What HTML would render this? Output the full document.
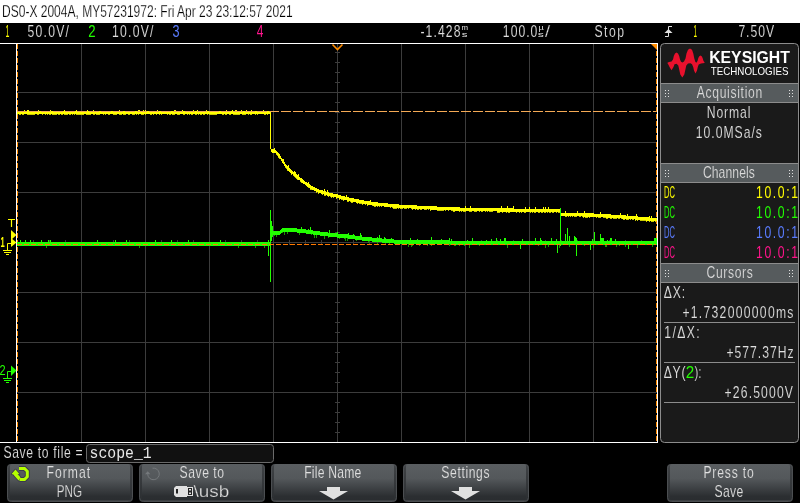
<!DOCTYPE html>
<html><head><meta charset="utf-8"><style>
html,body{margin:0;padding:0;background:#000;width:800px;height:503px;overflow:hidden}
svg{display:block;will-change:transform}
text{font-family:"Liberation Sans",sans-serif}
</style></head><body>
<svg width="800" height="503" viewBox="0 0 800 503">
<rect width="800" height="503" fill="#000"/>
<rect x="0" y="0" width="800" height="23" fill="#ffffff"/>
<text x="2.02" y="17" font-size="17.4" textLength="290.57" lengthAdjust="spacingAndGlyphs" fill="#000" stroke="#fff" stroke-width="0.25">DS0-X 2004A, MY57231972: Fri Apr 23 23:12:57 2021</text>
<text x="5.47" y="37" font-size="17.4" textLength="3.87" lengthAdjust="spacingAndGlyphs" fill="#ffff00">1</text>
<text transform="translate(27.51 37) scale(0.7 1)" font-size="17.4" letter-spacing="1.793" fill="#e0e0e0" stroke="#000" stroke-width="0.150">50.0V/</text>
<text x="88.34" y="37" font-size="17.4" textLength="7.32" lengthAdjust="spacingAndGlyphs" fill="#22ff00">2</text>
<text transform="translate(112.07 37) scale(0.7 1)" font-size="17.4" letter-spacing="1.775" fill="#e0e0e0" stroke="#000" stroke-width="0.150">10.0V/</text>
<text x="172.52" y="37" font-size="17.4" textLength="7.04" lengthAdjust="spacingAndGlyphs" fill="#5a7cff">3</text>
<text x="256.73" y="37" font-size="17.4" textLength="6.62" lengthAdjust="spacingAndGlyphs" fill="#ff148c">4</text>
<text transform="translate(420.46 37) scale(0.7 1)" font-size="17.4" letter-spacing="1.581" fill="#e0e0e0" stroke="#000" stroke-width="0.150">-1.428</text>
<text x="461.58" y="29.8" font-size="7" textLength="6.54" lengthAdjust="spacingAndGlyphs" fill="#e0e0e0">m</text>
<text x="461.68" y="36.5" font-size="7.8" textLength="5.73" lengthAdjust="spacingAndGlyphs" fill="#e0e0e0">s</text>
<text transform="translate(502.87 37) scale(0.7 1)" font-size="17.4" letter-spacing="1.437" fill="#e0e0e0" stroke="#000" stroke-width="0.150">100.0</text>
<text x="538.42" y="29.5" font-size="7.5" textLength="5.30" lengthAdjust="spacingAndGlyphs" fill="#e0e0e0">µ</text>
<text x="537.79" y="36.5" font-size="7.8" textLength="6.10" lengthAdjust="spacingAndGlyphs" fill="#e0e0e0">s</text>
<text x="545.00" y="37" font-size="17.4" textLength="5.20" lengthAdjust="spacingAndGlyphs" fill="#e0e0e0" stroke="#000" stroke-width="0.25">/</text>
<text transform="translate(594.45 37) scale(0.7 1)" font-size="17.4" letter-spacing="2.147" fill="#e0e0e0" stroke="#000" stroke-width="0.150">Stop</text>
<text x="693.43" y="37" font-size="17.4" textLength="3.53" lengthAdjust="spacingAndGlyphs" fill="#ffff00">1</text>
<text transform="translate(738.38 37) scale(0.7 1)" font-size="17.4" letter-spacing="1.374" fill="#e0e0e0" stroke="#000" stroke-width="0.150">7.50V</text>
<path d="M665 36.5H668.5V26.5H672" stroke="#e0e0e0" stroke-width="1" fill="none"/>
<path d="M664.5 33L668.5 29L672.5 33Z" fill="#e0e0e0"/>
<path d="M81.5 44V442 M145.5 44V442 M209.5 44V442 M273.5 44V442 M337.5 44V442 M401.5 44V442 M465.5 44V442 M529.5 44V442 M593.5 44V442 M17 92.5H657 M17 142.5H657 M17 192.5H657 M17 242.5H657 M17 292.5H657 M17 342.5H657 M17 392.5H657 M335 52.5H340 M335 62.5H340 M335 72.5H340 M335 82.5H340 M335 92.5H340 M335 102.5H340 M335 112.5H340 M335 122.5H340 M335 132.5H340 M335 142.5H340 M335 152.5H340 M335 162.5H340 M335 172.5H340 M335 182.5H340 M335 192.5H340 M335 202.5H340 M335 212.5H340 M335 222.5H340 M335 232.5H340 M335 242.5H340 M335 252.5H340 M335 262.5H340 M335 272.5H340 M335 282.5H340 M335 292.5H340 M335 302.5H340 M335 312.5H340 M335 322.5H340 M335 332.5H340 M335 342.5H340 M335 352.5H340 M335 362.5H340 M335 372.5H340 M335 382.5H340 M335 392.5H340 M335 402.5H340 M335 412.5H340 M335 422.5H340 M335 432.5H340 M33.5 240V245 M49.5 240V245 M65.5 240V245 M81.5 240V245 M97.5 240V245 M113.5 240V245 M129.5 240V245 M145.5 240V245 M161.5 240V245 M177.5 240V245 M193.5 240V245 M209.5 240V245 M225.5 240V245 M241.5 240V245 M257.5 240V245 M273.5 240V245 M289.5 240V245 M305.5 240V245 M321.5 240V245 M337.5 240V245 M353.5 240V245 M369.5 240V245 M385.5 240V245 M401.5 240V245 M417.5 240V245 M433.5 240V245 M449.5 240V245 M465.5 240V245 M481.5 240V245 M497.5 240V245 M513.5 240V245 M529.5 240V245 M545.5 240V245 M561.5 240V245 M577.5 240V245 M593.5 240V245 M609.5 240V245 M625.5 240V245 M641.5 240V245" stroke="#3c3c3c" stroke-width="1" fill="none"/>
<path d="M0 43.5H657.5 M16.5 43V443 M657.5 43V443 M0 442.5H658" stroke="#ffffff" stroke-width="1" fill="none"/>
<path d="M17.5 44V442 M656.5 44V442" stroke="#ff8c00" stroke-width="1" stroke-dasharray="5 2" fill="none"/>
<path d="M17 114h1v1h-1zM19 114h1v1h-1zM20 114h1v1h-1zM22 114h1v1h-1zM23 114h1v1h-1zM27 114h1v1h-1zM28 114h1v1h-1zM29 114h1v1h-1zM30 114h1v1h-1zM31 114h1v1h-1zM32 114h1v1h-1zM33 114h1v1h-1zM34 114h1v1h-1zM37 114h1v1h-1zM38 114h1v1h-1zM42 114h1v1h-1zM45 114h1v1h-1zM47 114h1v1h-1zM49 114h1v1h-1zM50 114h1v1h-1zM52 114h1v1h-1zM53 114h1v1h-1zM54 114h1v1h-1zM55 114h1v1h-1zM56 114h1v1h-1zM58 114h1v1h-1zM59 114h1v1h-1zM61 114h1v1h-1zM62 114h1v1h-1zM64 114h1v1h-1zM65 114h1v1h-1zM66 114h1v1h-1zM67 114h1v1h-1zM69 114h1v1h-1zM70 114h1v1h-1zM72 114h1v1h-1zM74 114h1v1h-1zM76 114h1v1h-1zM77 114h1v1h-1zM78 114h1v1h-1zM79 114h1v1h-1zM80 114h1v1h-1zM81 114h1v1h-1zM82 114h1v1h-1zM83 114h1v1h-1zM86 114h1v1h-1zM87 114h1v1h-1zM88 114h1v1h-1zM89 114h1v1h-1zM90 114h1v1h-1zM93 114h1v1h-1zM94 114h1v1h-1zM96 114h1v1h-1zM97 114h1v1h-1zM98 114h1v1h-1zM99 114h1v1h-1zM103 114h1v1h-1zM105 114h1v1h-1zM108 114h1v1h-1zM109 114h1v1h-1zM113 114h1v1h-1zM114 114h1v1h-1zM115 114h1v1h-1zM116 114h1v1h-1zM119 114h1v1h-1zM120 114h1v1h-1zM121 114h1v1h-1zM123 114h1v1h-1zM124 114h1v1h-1zM125 114h1v1h-1zM128 114h1v1h-1zM129 114h1v1h-1zM132 114h1v1h-1zM133 114h1v1h-1zM134 114h1v1h-1zM136 114h1v1h-1zM138 114h1v1h-1zM141 114h1v1h-1zM142 114h1v1h-1zM143 114h1v1h-1zM145 114h1v1h-1zM150 114h1v1h-1zM151 114h1v1h-1zM153 114h1v1h-1zM156 114h1v1h-1zM159 114h1v1h-1zM161 114h1v1h-1zM167 114h1v1h-1zM169 114h1v1h-1zM170 114h1v1h-1zM172 114h1v1h-1zM173 114h1v1h-1zM174 114h1v1h-1zM177 114h1v1h-1zM178 114h1v1h-1zM179 114h1v1h-1zM183 114h1v1h-1zM184 114h1v1h-1zM187 114h1v1h-1zM189 114h1v1h-1zM191 114h1v1h-1zM192 114h1v1h-1zM195 114h1v1h-1zM196 114h1v1h-1zM198 114h1v1h-1zM200 114h1v1h-1zM201 114h1v1h-1zM203 114h1v1h-1zM204 114h1v1h-1zM207 114h1v1h-1zM209 114h1v1h-1zM210 114h1v1h-1zM211 114h1v1h-1zM212 114h1v1h-1zM213 114h1v1h-1zM214 114h1v1h-1zM215 114h1v1h-1zM216 114h1v1h-1zM222 114h1v1h-1zM223 114h1v1h-1zM225 114h1v1h-1zM226 114h1v1h-1zM229 114h1v1h-1zM230 114h1v1h-1zM233 114h1v1h-1zM234 114h1v1h-1zM235 114h1v1h-1zM236 114h1v1h-1zM237 114h1v1h-1zM238 114h1v1h-1zM239 114h1v1h-1zM242 114h1v1h-1zM243 114h1v1h-1zM244 114h1v1h-1zM245 114h1v1h-1zM248 114h1v1h-1zM250 114h1v1h-1zM251 114h1v1h-1zM255 114h1v1h-1zM257 114h1v1h-1zM264 114h1v1h-1zM265 114h1v1h-1zM267 114h1v1h-1zM276 154h1v1h-1zM277 155h1v1h-1zM278 157h1v1h-1zM279 158h1v1h-1zM285 167h1v1h-1zM286 168h1v1h-1zM287 170h1v1h-1zM291 174h1v1h-1zM293 175h1v1h-1zM294 176h1v1h-1zM295 177h1v1h-1zM296 178h1v1h-1zM297 179h1v1h-1zM300 181h1v1h-1zM301 182h1v1h-1zM308 187h1v1h-1zM310 189h1v1h-1zM311 189h1v1h-1zM316 192h1v1h-1zM318 193h1v1h-1zM322 194h1v1h-1zM324 195h1v1h-1zM325 195h1v1h-1zM328 196h1v1h-1zM330 196h1v1h-1zM331 197h1v1h-1zM333 197h1v1h-1zM336 198h1v1h-1zM339 199h1v1h-1zM341 199h1v1h-1zM342 199h1v1h-1zM343 200h1v1h-1zM347 201h1v1h-1zM348 201h1v1h-1zM350 201h1v1h-1zM351 202h1v1h-1zM352 202h1v1h-1zM357 203h1v1h-1zM359 203h1v1h-1zM360 203h1v1h-1zM361 203h1v1h-1zM362 204h1v1h-1zM365 204h1v1h-1zM367 205h1v1h-1zM372 205h1v1h-1zM374 206h1v1h-1zM375 206h1v1h-1zM377 206h1v1h-1zM379 206h1v1h-1zM381 206h1v1h-1zM390 207h1v1h-1zM392 207h1v1h-1zM393 208h1v1h-1zM394 208h1v1h-1zM395 208h1v1h-1zM396 208h1v1h-1zM398 208h1v1h-1zM400 208h1v1h-1zM401 208h1v1h-1zM402 208h1v1h-1zM404 208h1v1h-1zM405 208h1v1h-1zM406 208h1v1h-1zM408 208h1v1h-1zM411 208h1v1h-1zM412 209h1v1h-1zM415 209h1v1h-1zM417 209h1v1h-1zM418 209h1v1h-1zM420 209h1v1h-1zM421 209h1v1h-1zM424 209h1v1h-1zM425 209h1v1h-1zM426 209h1v1h-1zM428 209h1v1h-1zM430 210h1v1h-1zM437 210h1v1h-1zM438 210h1v1h-1zM439 210h1v1h-1zM440 210h1v1h-1zM441 210h1v1h-1zM442 210h1v1h-1zM443 210h1v1h-1zM445 210h1v1h-1zM448 210h1v1h-1zM451 210h1v1h-1zM452 210h1v1h-1zM453 211h1v1h-1zM454 211h1v1h-1zM459 211h1v1h-1zM461 211h1v1h-1zM463 211h1v1h-1zM464 211h1v1h-1zM465 211h1v1h-1zM469 211h1v1h-1zM470 211h1v1h-1zM471 211h1v1h-1zM474 211h1v1h-1zM475 211h1v1h-1zM476 211h1v1h-1zM479 211h1v1h-1zM481 211h1v1h-1zM482 211h1v1h-1zM485 211h1v1h-1zM487 211h1v1h-1zM489 211h1v1h-1zM490 211h1v1h-1zM491 211h1v1h-1zM492 211h1v1h-1zM497 212h1v1h-1zM498 212h1v1h-1zM499 212h1v1h-1zM502 212h1v1h-1zM506 212h1v1h-1zM508 212h1v1h-1zM509 212h1v1h-1zM516 212h1v1h-1zM519 212h1v1h-1zM521 212h1v1h-1zM524 212h1v1h-1zM525 212h1v1h-1zM530 212h1v1h-1zM532 212h1v1h-1zM534 212h1v1h-1zM535 212h1v1h-1zM538 212h1v1h-1zM539 212h1v1h-1zM541 212h1v1h-1zM542 212h1v1h-1zM544 212h1v1h-1zM545 212h1v1h-1zM547 212h1v1h-1zM549 212h1v1h-1zM550 212h1v1h-1zM552 212h1v1h-1zM553 212h1v1h-1zM556 212h1v1h-1zM558 212h1v1h-1zM559 212h1v1h-1zM560 214h1v1h-1zM565 216h1v1h-1zM566 216h1v1h-1zM568 216h1v1h-1zM570 216h1v1h-1zM572 216h1v1h-1zM574 216h1v1h-1zM575 216h1v1h-1zM576 216h1v1h-1zM579 216h1v1h-1zM580 216h1v1h-1zM582 216h1v1h-1zM583 217h1v1h-1zM585 217h1v1h-1zM586 217h1v1h-1zM587 217h1v1h-1zM589 217h1v1h-1zM596 217h1v1h-1zM598 217h1v1h-1zM599 217h1v1h-1zM600 217h1v1h-1zM603 217h1v1h-1zM604 217h1v1h-1zM605 217h1v1h-1zM606 218h1v1h-1zM607 218h1v1h-1zM610 218h1v1h-1zM611 218h1v1h-1zM613 218h1v1h-1zM614 218h1v1h-1zM615 218h1v1h-1zM616 218h1v1h-1zM618 218h1v1h-1zM619 218h1v1h-1zM621 218h1v1h-1zM623 219h1v1h-1zM624 219h1v1h-1zM626 219h1v1h-1zM627 219h1v1h-1zM628 219h1v1h-1zM630 219h1v1h-1zM632 219h1v1h-1zM633 219h1v1h-1zM635 220h1v1h-1zM637 220h1v1h-1zM640 220h1v1h-1zM641 220h1v1h-1zM642 220h1v1h-1zM643 220h1v1h-1zM644 220h1v1h-1zM645 220h1v1h-1zM646 221h1v1h-1zM649 221h1v1h-1zM651 221h1v1h-1zM652 221h1v1h-1zM653 221h1v1h-1zM655 221h1v1h-1z" fill="#c8c800"/>
<path d="M17 111h1v3h-1zM18 111h1v3h-1zM19 111h1v3h-1zM20 111h1v3h-1zM21 111h1v3h-1zM22 111h1v3h-1zM23 111h1v3h-1zM24 111h1v3h-1zM24 110h1v1h-1zM25 111h1v3h-1zM26 111h1v3h-1zM27 111h1v3h-1zM27 110h1v1h-1zM28 111h1v3h-1zM28 110h1v1h-1zM29 111h1v3h-1zM30 111h1v3h-1zM31 111h1v3h-1zM32 111h1v3h-1zM33 111h1v3h-1zM34 111h1v3h-1zM35 111h1v3h-1zM36 111h1v3h-1zM37 111h1v3h-1zM38 111h1v3h-1zM38 110h1v1h-1zM39 111h1v3h-1zM40 111h1v3h-1zM41 111h1v3h-1zM42 111h1v3h-1zM43 111h1v3h-1zM44 111h1v3h-1zM45 111h1v3h-1zM46 111h1v3h-1zM47 111h1v3h-1zM48 111h1v3h-1zM49 111h1v3h-1zM50 111h1v3h-1zM50 110h1v1h-1zM51 111h1v3h-1zM52 111h1v3h-1zM53 111h1v3h-1zM54 111h1v3h-1zM55 111h1v3h-1zM56 111h1v3h-1zM57 111h1v3h-1zM58 111h1v3h-1zM59 111h1v3h-1zM60 111h1v3h-1zM61 111h1v3h-1zM62 111h1v3h-1zM63 111h1v3h-1zM64 111h1v3h-1zM64 110h1v1h-1zM65 111h1v3h-1zM66 111h1v3h-1zM67 111h1v3h-1zM68 111h1v3h-1zM69 111h1v3h-1zM70 111h1v3h-1zM71 111h1v3h-1zM72 111h1v3h-1zM73 111h1v3h-1zM74 111h1v3h-1zM75 111h1v3h-1zM76 111h1v3h-1zM76 110h1v1h-1zM77 111h1v3h-1zM78 111h1v3h-1zM79 111h1v3h-1zM80 111h1v3h-1zM81 111h1v3h-1zM82 111h1v3h-1zM83 111h1v3h-1zM84 111h1v3h-1zM85 111h1v3h-1zM86 111h1v3h-1zM87 111h1v3h-1zM87 110h1v1h-1zM88 111h1v3h-1zM89 111h1v3h-1zM90 111h1v3h-1zM91 111h1v3h-1zM92 111h1v3h-1zM93 111h1v3h-1zM93 110h1v1h-1zM94 111h1v3h-1zM95 111h1v3h-1zM96 111h1v3h-1zM97 111h1v3h-1zM98 111h1v3h-1zM99 111h1v3h-1zM100 111h1v3h-1zM101 111h1v3h-1zM102 111h1v3h-1zM103 111h1v3h-1zM104 111h1v3h-1zM105 111h1v3h-1zM106 111h1v3h-1zM107 111h1v3h-1zM108 111h1v3h-1zM109 111h1v3h-1zM110 111h1v3h-1zM111 111h1v3h-1zM112 111h1v3h-1zM113 111h1v3h-1zM114 111h1v3h-1zM115 111h1v3h-1zM116 111h1v3h-1zM117 111h1v3h-1zM118 111h1v3h-1zM119 111h1v3h-1zM119 110h1v1h-1zM120 111h1v3h-1zM121 111h1v3h-1zM122 111h1v3h-1zM123 111h1v3h-1zM124 111h1v3h-1zM125 111h1v3h-1zM126 111h1v3h-1zM127 111h1v3h-1zM128 111h1v3h-1zM129 111h1v3h-1zM130 111h1v3h-1zM131 111h1v3h-1zM132 111h1v3h-1zM133 111h1v3h-1zM134 111h1v3h-1zM135 111h1v3h-1zM136 111h1v3h-1zM137 111h1v3h-1zM138 111h1v3h-1zM138 110h1v1h-1zM139 111h1v3h-1zM139 110h1v1h-1zM140 111h1v3h-1zM141 111h1v3h-1zM142 111h1v3h-1zM143 111h1v3h-1zM143 110h1v1h-1zM144 111h1v3h-1zM145 111h1v3h-1zM145 110h1v1h-1zM146 111h1v3h-1zM147 111h1v3h-1zM148 111h1v3h-1zM149 111h1v3h-1zM150 111h1v3h-1zM151 111h1v3h-1zM152 111h1v3h-1zM153 111h1v3h-1zM154 111h1v3h-1zM155 111h1v3h-1zM156 111h1v3h-1zM157 111h1v3h-1zM157 110h1v1h-1zM158 111h1v3h-1zM159 111h1v3h-1zM160 111h1v3h-1zM161 111h1v3h-1zM162 111h1v3h-1zM163 111h1v3h-1zM164 111h1v3h-1zM165 111h1v3h-1zM166 111h1v3h-1zM167 111h1v3h-1zM168 111h1v3h-1zM169 111h1v3h-1zM170 111h1v3h-1zM171 111h1v3h-1zM172 111h1v3h-1zM173 111h1v3h-1zM174 111h1v3h-1zM174 110h1v1h-1zM175 111h1v3h-1zM175 110h1v1h-1zM176 111h1v3h-1zM177 111h1v3h-1zM178 111h1v3h-1zM179 111h1v3h-1zM180 111h1v3h-1zM181 111h1v3h-1zM182 111h1v3h-1zM182 110h1v1h-1zM183 111h1v3h-1zM184 111h1v3h-1zM185 111h1v3h-1zM186 111h1v3h-1zM187 111h1v3h-1zM188 111h1v3h-1zM189 111h1v3h-1zM190 111h1v3h-1zM191 111h1v3h-1zM192 111h1v3h-1zM193 111h1v3h-1zM193 110h1v1h-1zM194 111h1v3h-1zM195 111h1v3h-1zM196 111h1v3h-1zM197 111h1v3h-1zM197 110h1v1h-1zM198 111h1v3h-1zM199 111h1v3h-1zM200 111h1v3h-1zM201 111h1v3h-1zM202 111h1v3h-1zM203 111h1v3h-1zM204 111h1v3h-1zM205 111h1v3h-1zM206 111h1v3h-1zM206 110h1v1h-1zM207 111h1v3h-1zM208 111h1v3h-1zM209 111h1v3h-1zM210 111h1v3h-1zM211 111h1v3h-1zM212 111h1v3h-1zM213 111h1v3h-1zM214 111h1v3h-1zM215 111h1v3h-1zM216 111h1v3h-1zM217 111h1v3h-1zM218 111h1v3h-1zM219 111h1v3h-1zM220 111h1v3h-1zM221 111h1v3h-1zM222 111h1v3h-1zM223 111h1v3h-1zM224 111h1v3h-1zM225 111h1v3h-1zM226 111h1v3h-1zM226 110h1v1h-1zM227 111h1v3h-1zM228 111h1v3h-1zM229 111h1v3h-1zM230 111h1v3h-1zM231 111h1v3h-1zM232 111h1v3h-1zM232 110h1v1h-1zM233 111h1v3h-1zM234 111h1v3h-1zM235 111h1v3h-1zM235 110h1v1h-1zM236 111h1v3h-1zM236 110h1v1h-1zM237 111h1v3h-1zM238 111h1v3h-1zM239 111h1v3h-1zM240 111h1v3h-1zM241 111h1v3h-1zM241 110h1v1h-1zM242 111h1v3h-1zM243 111h1v3h-1zM244 111h1v3h-1zM245 111h1v3h-1zM246 111h1v3h-1zM246 110h1v1h-1zM247 111h1v3h-1zM248 111h1v3h-1zM249 111h1v3h-1zM250 111h1v3h-1zM251 111h1v3h-1zM251 110h1v1h-1zM252 111h1v3h-1zM253 111h1v3h-1zM254 111h1v3h-1zM255 111h1v3h-1zM256 111h1v3h-1zM257 111h1v3h-1zM258 111h1v3h-1zM259 111h1v3h-1zM260 111h1v3h-1zM261 111h1v3h-1zM262 111h1v3h-1zM263 111h1v3h-1zM263 110h1v1h-1zM264 111h1v3h-1zM265 111h1v3h-1zM266 111h1v3h-1zM267 111h1v3h-1zM268 111h1v3h-1zM269 111h1v3h-1zM270 112h1v37h-1zM271 149h1v3h-1zM272 149h1v4h-1zM273 149h1v4h-1zM274 150h1v3h-1zM274 148h1v2h-1zM275 150h1v3h-1zM276 151h1v3h-1zM277 152h1v3h-1zM278 153h1v4h-1zM279 154h1v4h-1zM280 156h1v3h-1zM281 158h1v3h-1zM282 159h1v4h-1zM283 161h1v3h-1zM283 159h1v2h-1zM284 162h1v4h-1zM285 164h1v3h-1zM286 165h1v3h-1zM287 166h1v4h-1zM288 167h1v4h-1zM288 165h1v2h-1zM289 168h1v4h-1zM290 169h1v4h-1zM291 170h1v4h-1zM292 171h1v3h-1zM293 172h1v3h-1zM294 173h1v3h-1zM294 171h1v2h-1zM295 174h1v3h-1zM295 172h1v2h-1zM296 174h1v4h-1zM297 175h1v4h-1zM298 176h1v4h-1zM298 174h1v2h-1zM299 177h1v3h-1zM300 178h1v3h-1zM301 178h1v4h-1zM302 179h1v4h-1zM303 180h1v4h-1zM304 181h1v3h-1zM305 182h1v3h-1zM306 182h1v4h-1zM307 183h1v4h-1zM308 184h1v3h-1zM308 182h1v2h-1zM309 184h1v4h-1zM310 185h1v4h-1zM311 186h1v3h-1zM312 186h1v4h-1zM313 187h1v3h-1zM314 187h1v4h-1zM315 188h1v3h-1zM316 188h1v4h-1zM317 189h1v3h-1zM318 189h1v4h-1zM319 190h1v3h-1zM320 190h1v3h-1zM321 190h1v4h-1zM322 190h1v4h-1zM323 191h1v3h-1zM324 191h1v4h-1zM324 189h1v2h-1zM325 191h1v4h-1zM326 192h1v3h-1zM327 192h1v4h-1zM327 190h1v2h-1zM328 192h1v4h-1zM329 193h1v3h-1zM330 193h1v3h-1zM331 193h1v4h-1zM332 193h1v4h-1zM333 194h1v3h-1zM334 194h1v3h-1zM335 194h1v3h-1zM336 194h1v4h-1zM337 194h1v4h-1zM338 195h1v3h-1zM339 195h1v4h-1zM340 195h1v4h-1zM341 196h1v3h-1zM342 196h1v3h-1zM343 196h1v4h-1zM344 196h1v4h-1zM345 197h1v3h-1zM346 197h1v3h-1zM346 195h1v2h-1zM347 197h1v4h-1zM348 197h1v4h-1zM349 198h1v3h-1zM350 198h1v3h-1zM351 198h1v4h-1zM352 198h1v4h-1zM353 198h1v4h-1zM354 199h1v3h-1zM355 199h1v3h-1zM356 199h1v4h-1zM357 199h1v4h-1zM358 199h1v4h-1zM359 200h1v3h-1zM360 200h1v3h-1zM361 200h1v3h-1zM362 200h1v4h-1zM363 200h1v4h-1zM364 201h1v3h-1zM365 201h1v3h-1zM366 201h1v3h-1zM367 201h1v4h-1zM368 201h1v4h-1zM369 201h1v4h-1zM370 202h1v3h-1zM370 200h1v2h-1zM371 202h1v3h-1zM372 202h1v3h-1zM373 202h1v4h-1zM374 202h1v4h-1zM375 202h1v4h-1zM376 202h1v4h-1zM377 202h1v4h-1zM378 203h1v3h-1zM379 203h1v3h-1zM380 203h1v3h-1zM381 203h1v3h-1zM382 203h1v3h-1zM383 203h1v3h-1zM384 203h1v4h-1zM385 203h1v4h-1zM386 203h1v4h-1zM387 203h1v4h-1zM388 204h1v3h-1zM389 204h1v3h-1zM390 204h1v3h-1zM391 204h1v3h-1zM392 204h1v3h-1zM393 204h1v4h-1zM394 204h1v4h-1zM395 204h1v4h-1zM396 204h1v4h-1zM397 204h1v4h-1zM398 204h1v4h-1zM399 205h1v3h-1zM400 205h1v3h-1zM401 205h1v3h-1zM402 205h1v3h-1zM403 205h1v3h-1zM404 205h1v3h-1zM405 205h1v3h-1zM406 205h1v3h-1zM407 205h1v3h-1zM408 205h1v3h-1zM409 205h1v3h-1zM410 205h1v3h-1zM411 205h1v3h-1zM412 205h1v4h-1zM413 205h1v4h-1zM414 205h1v4h-1zM415 205h1v4h-1zM416 205h1v4h-1zM417 206h1v3h-1zM418 206h1v3h-1zM419 206h1v3h-1zM420 206h1v3h-1zM421 206h1v3h-1zM422 206h1v3h-1zM423 206h1v3h-1zM424 206h1v3h-1zM425 206h1v3h-1zM426 206h1v3h-1zM427 206h1v3h-1zM428 206h1v3h-1zM429 206h1v3h-1zM430 206h1v4h-1zM431 206h1v4h-1zM432 206h1v4h-1zM433 206h1v4h-1zM434 206h1v4h-1zM435 206h1v4h-1zM436 206h1v4h-1zM437 207h1v3h-1zM438 207h1v3h-1zM439 207h1v3h-1zM440 207h1v3h-1zM441 207h1v3h-1zM442 207h1v3h-1zM443 207h1v3h-1zM444 207h1v3h-1zM445 207h1v3h-1zM446 207h1v3h-1zM447 207h1v3h-1zM448 207h1v3h-1zM449 207h1v3h-1zM450 207h1v3h-1zM451 207h1v3h-1zM452 207h1v3h-1zM453 207h1v4h-1zM454 207h1v4h-1zM455 207h1v4h-1zM456 207h1v4h-1zM457 207h1v4h-1zM458 207h1v4h-1zM459 207h1v4h-1zM460 208h1v3h-1zM461 208h1v3h-1zM462 208h1v3h-1zM463 208h1v3h-1zM464 208h1v3h-1zM465 208h1v3h-1zM465 206h1v2h-1zM466 208h1v3h-1zM467 208h1v3h-1zM468 208h1v3h-1zM469 208h1v3h-1zM470 208h1v3h-1zM470 206h1v2h-1zM471 208h1v3h-1zM472 208h1v3h-1zM473 208h1v3h-1zM474 208h1v3h-1zM475 208h1v3h-1zM476 208h1v3h-1zM477 208h1v3h-1zM478 208h1v3h-1zM479 208h1v3h-1zM480 208h1v3h-1zM481 208h1v3h-1zM482 208h1v3h-1zM483 208h1v3h-1zM484 208h1v3h-1zM485 208h1v3h-1zM486 208h1v3h-1zM487 208h1v3h-1zM488 208h1v3h-1zM489 208h1v3h-1zM490 208h1v3h-1zM491 208h1v3h-1zM492 208h1v3h-1zM493 208h1v3h-1zM494 208h1v3h-1zM495 208h1v3h-1zM496 208h1v3h-1zM497 208h1v4h-1zM498 208h1v4h-1zM499 208h1v4h-1zM500 208h1v4h-1zM501 208h1v4h-1zM501 206h1v2h-1zM502 208h1v4h-1zM503 208h1v4h-1zM504 208h1v4h-1zM505 208h1v4h-1zM506 208h1v4h-1zM507 208h1v4h-1zM507 206h1v2h-1zM508 208h1v4h-1zM509 208h1v4h-1zM510 208h1v4h-1zM511 208h1v4h-1zM512 208h1v4h-1zM513 208h1v4h-1zM513 206h1v2h-1zM514 209h1v3h-1zM515 209h1v3h-1zM516 209h1v3h-1zM517 209h1v3h-1zM518 209h1v3h-1zM519 209h1v3h-1zM520 209h1v3h-1zM521 209h1v3h-1zM522 209h1v3h-1zM523 209h1v3h-1zM524 209h1v3h-1zM525 209h1v3h-1zM525 207h1v2h-1zM526 209h1v3h-1zM527 209h1v3h-1zM528 209h1v3h-1zM529 209h1v3h-1zM529 207h1v2h-1zM530 209h1v3h-1zM531 209h1v3h-1zM532 209h1v3h-1zM533 209h1v3h-1zM534 209h1v3h-1zM535 209h1v3h-1zM535 207h1v2h-1zM536 209h1v3h-1zM537 209h1v3h-1zM538 209h1v3h-1zM539 209h1v3h-1zM540 209h1v3h-1zM541 209h1v3h-1zM542 209h1v3h-1zM543 209h1v3h-1zM543 207h1v2h-1zM544 209h1v3h-1zM545 209h1v3h-1zM545 207h1v2h-1zM546 209h1v3h-1zM547 209h1v3h-1zM548 209h1v3h-1zM548 207h1v2h-1zM549 209h1v3h-1zM550 209h1v3h-1zM551 209h1v3h-1zM552 209h1v3h-1zM553 209h1v3h-1zM554 209h1v3h-1zM555 209h1v3h-1zM556 209h1v3h-1zM557 209h1v3h-1zM558 209h1v3h-1zM559 209h1v3h-1zM560 211h1v3h-1zM561 213h1v3h-1zM562 213h1v3h-1zM563 213h1v3h-1zM564 213h1v3h-1zM565 213h1v3h-1zM565 211h1v2h-1zM566 213h1v3h-1zM567 213h1v3h-1zM568 213h1v3h-1zM569 213h1v3h-1zM570 213h1v3h-1zM571 213h1v3h-1zM572 213h1v3h-1zM573 213h1v3h-1zM574 213h1v3h-1zM575 213h1v3h-1zM576 213h1v3h-1zM577 213h1v3h-1zM577 211h1v2h-1zM578 213h1v3h-1zM579 213h1v3h-1zM580 213h1v3h-1zM581 213h1v3h-1zM582 213h1v3h-1zM583 213h1v4h-1zM584 213h1v4h-1zM584 211h1v2h-1zM585 213h1v4h-1zM586 213h1v4h-1zM587 213h1v4h-1zM588 213h1v4h-1zM589 213h1v4h-1zM590 213h1v4h-1zM591 213h1v4h-1zM592 213h1v4h-1zM593 213h1v4h-1zM594 214h1v3h-1zM595 214h1v3h-1zM596 214h1v3h-1zM597 214h1v3h-1zM598 214h1v3h-1zM599 214h1v3h-1zM600 214h1v3h-1zM600 212h1v2h-1zM601 214h1v3h-1zM602 214h1v3h-1zM603 214h1v3h-1zM604 214h1v3h-1zM605 214h1v3h-1zM606 214h1v4h-1zM607 214h1v4h-1zM608 214h1v4h-1zM609 214h1v4h-1zM610 214h1v4h-1zM611 215h1v3h-1zM612 215h1v3h-1zM613 215h1v3h-1zM614 215h1v3h-1zM615 215h1v3h-1zM616 215h1v3h-1zM617 215h1v3h-1zM618 215h1v3h-1zM619 215h1v3h-1zM620 215h1v3h-1zM620 213h1v2h-1zM621 215h1v3h-1zM622 215h1v4h-1zM623 215h1v4h-1zM624 215h1v4h-1zM625 215h1v4h-1zM626 216h1v3h-1zM627 216h1v3h-1zM627 214h1v2h-1zM628 216h1v3h-1zM629 216h1v3h-1zM630 216h1v3h-1zM631 216h1v3h-1zM632 216h1v3h-1zM633 216h1v3h-1zM634 216h1v3h-1zM635 216h1v4h-1zM636 216h1v4h-1zM636 214h1v2h-1zM637 216h1v4h-1zM638 217h1v3h-1zM639 217h1v3h-1zM640 217h1v3h-1zM641 217h1v3h-1zM642 217h1v3h-1zM643 217h1v3h-1zM644 217h1v3h-1zM645 217h1v3h-1zM646 217h1v4h-1zM647 217h1v4h-1zM648 217h1v4h-1zM649 218h1v3h-1zM649 216h1v2h-1zM650 218h1v3h-1zM651 218h1v3h-1zM651 216h1v2h-1zM652 218h1v3h-1zM653 218h1v3h-1zM654 218h1v3h-1zM655 218h1v3h-1zM656 218h1v3h-1z" fill="#ffff00"/>
<path d="M46 246h1v2h-1zM139 246h1v2h-1zM238 246h1v2h-1zM255 246h1v2h-1zM264 246h1v2h-1zM274 235h1v1h-1zM276 235h1v2h-1zM282 232h1v1h-1zM284 232h1v3h-1zM287 232h1v2h-1zM299 233h1v2h-1zM311 234h1v1h-1zM314 235h1v3h-1zM316 235h1v3h-1zM324 236h1v3h-1zM328 237h1v1h-1zM339 238h1v1h-1zM344 238h1v1h-1zM345 238h1v3h-1zM347 238h1v3h-1zM356 240h1v1h-1zM368 241h1v2h-1zM377 242h1v2h-1zM389 243h1v2h-1zM396 244h1v1h-1zM408 244h1v3h-1zM411 244h1v3h-1zM412 244h1v2h-1zM419 244h1v2h-1zM426 244h1v1h-1zM427 244h1v2h-1zM429 244h1v1h-1zM431 244h1v2h-1zM433 244h1v1h-1zM437 244h1v1h-1zM449 244h1v2h-1zM454 245h1v1h-1zM455 245h1v1h-1zM459 245h1v1h-1zM464 245h1v1h-1zM469 245h1v3h-1zM479 245h1v1h-1zM507 245h1v3h-1zM538 245h1v1h-1zM545 245h1v3h-1zM548 245h1v2h-1zM559 245h1v3h-1zM569 245h1v2h-1zM584 245h1v1h-1zM593 245h1v3h-1zM605 245h1v2h-1zM606 245h1v2h-1zM616 245h1v2h-1zM619 245h1v1h-1zM625 245h1v2h-1zM628 245h1v1h-1zM637 245h1v3h-1zM652 245h1v2h-1z" fill="#1a9900"/>
<path d="M17 242h1v4h-1zM18 242h1v4h-1zM19 242h1v4h-1zM20 242h1v4h-1zM20 240h1v2h-1zM21 242h1v4h-1zM22 242h1v4h-1zM23 242h1v4h-1zM24 242h1v4h-1zM25 242h1v4h-1zM25 240h1v2h-1zM26 242h1v4h-1zM27 242h1v4h-1zM28 242h1v4h-1zM29 242h1v4h-1zM30 242h1v4h-1zM30 240h1v2h-1zM31 242h1v4h-1zM32 242h1v4h-1zM33 242h1v4h-1zM34 242h1v4h-1zM35 242h1v4h-1zM36 242h1v4h-1zM37 242h1v4h-1zM38 242h1v4h-1zM39 242h1v4h-1zM40 242h1v4h-1zM41 242h1v4h-1zM41 240h1v2h-1zM42 242h1v4h-1zM43 242h1v4h-1zM44 242h1v4h-1zM45 242h1v4h-1zM46 242h1v4h-1zM47 242h1v4h-1zM48 242h1v4h-1zM48 240h1v2h-1zM49 242h1v4h-1zM50 242h1v4h-1zM50 240h1v2h-1zM51 242h1v4h-1zM52 242h1v4h-1zM53 242h1v4h-1zM54 242h1v4h-1zM55 242h1v4h-1zM56 242h1v4h-1zM57 242h1v4h-1zM58 242h1v4h-1zM59 242h1v4h-1zM60 242h1v4h-1zM61 242h1v4h-1zM62 242h1v4h-1zM63 242h1v4h-1zM64 242h1v4h-1zM65 242h1v4h-1zM66 242h1v4h-1zM67 242h1v4h-1zM68 242h1v4h-1zM69 242h1v4h-1zM70 242h1v4h-1zM71 242h1v4h-1zM72 242h1v4h-1zM73 242h1v4h-1zM74 242h1v4h-1zM75 242h1v4h-1zM76 242h1v4h-1zM77 242h1v4h-1zM78 242h1v4h-1zM79 242h1v4h-1zM80 242h1v4h-1zM81 242h1v4h-1zM82 242h1v4h-1zM83 242h1v4h-1zM84 242h1v4h-1zM85 242h1v4h-1zM86 242h1v4h-1zM87 242h1v4h-1zM88 242h1v4h-1zM89 242h1v4h-1zM90 242h1v4h-1zM91 242h1v4h-1zM92 242h1v4h-1zM93 242h1v4h-1zM94 242h1v4h-1zM95 242h1v4h-1zM96 242h1v4h-1zM97 242h1v4h-1zM97 240h1v2h-1zM98 242h1v4h-1zM99 242h1v4h-1zM100 242h1v4h-1zM101 242h1v4h-1zM102 242h1v4h-1zM103 242h1v4h-1zM104 242h1v4h-1zM105 242h1v4h-1zM106 242h1v4h-1zM107 242h1v4h-1zM108 242h1v4h-1zM109 242h1v4h-1zM110 242h1v4h-1zM111 242h1v4h-1zM112 242h1v4h-1zM113 242h1v4h-1zM114 242h1v4h-1zM115 242h1v4h-1zM115 240h1v2h-1zM116 242h1v4h-1zM117 242h1v4h-1zM118 242h1v4h-1zM119 242h1v4h-1zM120 242h1v4h-1zM121 242h1v4h-1zM122 242h1v4h-1zM123 242h1v4h-1zM124 242h1v4h-1zM125 242h1v4h-1zM126 242h1v4h-1zM126 240h1v2h-1zM127 242h1v4h-1zM128 242h1v4h-1zM129 242h1v4h-1zM130 242h1v4h-1zM131 242h1v4h-1zM132 242h1v4h-1zM133 242h1v4h-1zM134 242h1v4h-1zM135 242h1v4h-1zM136 242h1v4h-1zM137 242h1v4h-1zM138 242h1v4h-1zM139 242h1v4h-1zM140 242h1v4h-1zM141 242h1v4h-1zM142 242h1v4h-1zM143 242h1v4h-1zM144 242h1v4h-1zM145 242h1v4h-1zM146 242h1v4h-1zM147 242h1v4h-1zM148 242h1v4h-1zM149 242h1v4h-1zM150 242h1v4h-1zM151 242h1v4h-1zM152 242h1v4h-1zM153 242h1v4h-1zM154 242h1v4h-1zM155 242h1v4h-1zM155 240h1v2h-1zM156 242h1v4h-1zM157 242h1v4h-1zM158 242h1v4h-1zM159 242h1v4h-1zM160 242h1v4h-1zM161 242h1v4h-1zM162 242h1v4h-1zM163 242h1v4h-1zM164 242h1v4h-1zM165 242h1v4h-1zM166 242h1v4h-1zM167 242h1v4h-1zM168 242h1v4h-1zM169 242h1v4h-1zM170 242h1v4h-1zM171 242h1v4h-1zM171 240h1v2h-1zM172 242h1v4h-1zM173 242h1v4h-1zM174 242h1v4h-1zM175 242h1v4h-1zM176 242h1v4h-1zM177 242h1v4h-1zM178 242h1v4h-1zM179 242h1v4h-1zM180 242h1v4h-1zM181 242h1v4h-1zM182 242h1v4h-1zM183 242h1v4h-1zM184 242h1v4h-1zM185 242h1v4h-1zM186 242h1v4h-1zM187 242h1v4h-1zM188 242h1v4h-1zM188 240h1v2h-1zM189 242h1v4h-1zM190 242h1v4h-1zM191 242h1v4h-1zM192 242h1v4h-1zM193 242h1v4h-1zM194 242h1v4h-1zM195 242h1v4h-1zM196 242h1v4h-1zM197 242h1v4h-1zM198 242h1v4h-1zM199 242h1v4h-1zM200 242h1v4h-1zM201 242h1v4h-1zM202 242h1v4h-1zM203 242h1v4h-1zM204 242h1v4h-1zM205 242h1v4h-1zM206 242h1v4h-1zM207 242h1v4h-1zM208 242h1v4h-1zM209 242h1v4h-1zM210 242h1v4h-1zM211 242h1v4h-1zM212 242h1v4h-1zM213 242h1v4h-1zM214 242h1v4h-1zM215 242h1v4h-1zM216 242h1v4h-1zM217 242h1v4h-1zM218 242h1v4h-1zM219 242h1v4h-1zM220 242h1v4h-1zM220 240h1v2h-1zM221 242h1v4h-1zM222 242h1v4h-1zM223 242h1v4h-1zM224 242h1v4h-1zM225 242h1v4h-1zM226 242h1v4h-1zM227 242h1v4h-1zM228 242h1v4h-1zM229 242h1v4h-1zM230 242h1v4h-1zM231 242h1v4h-1zM232 242h1v4h-1zM233 242h1v4h-1zM234 242h1v4h-1zM235 242h1v4h-1zM236 242h1v4h-1zM237 242h1v4h-1zM238 242h1v4h-1zM239 242h1v4h-1zM240 242h1v4h-1zM241 242h1v4h-1zM242 242h1v4h-1zM243 242h1v4h-1zM244 242h1v4h-1zM245 242h1v4h-1zM246 242h1v4h-1zM247 242h1v4h-1zM248 242h1v4h-1zM249 242h1v4h-1zM250 242h1v4h-1zM251 242h1v4h-1zM252 242h1v4h-1zM253 242h1v4h-1zM254 242h1v4h-1zM255 242h1v4h-1zM256 242h1v4h-1zM257 242h1v4h-1zM258 242h1v4h-1zM259 242h1v4h-1zM260 242h1v4h-1zM261 242h1v4h-1zM262 242h1v4h-1zM263 242h1v4h-1zM264 242h1v4h-1zM265 242h1v4h-1zM266 242h1v4h-1zM267 242h1v4h-1zM268 242h1v4h-1zM269 242h1v4h-1zM268 240h1v16h-1zM270 210h1v72h-1zM271 221h1v20h-1zM272 226h1v11h-1zM273 231h1v4h-1zM274 231h1v4h-1zM275 231h1v4h-1zM276 231h1v4h-1zM277 231h1v4h-1zM278 231h1v4h-1zM279 231h1v4h-1zM280 230h1v4h-1zM281 229h1v4h-1zM282 228h1v4h-1zM283 228h1v4h-1zM284 228h1v4h-1zM285 228h1v4h-1zM286 228h1v4h-1zM287 228h1v4h-1zM288 228h1v4h-1zM289 228h1v4h-1zM290 228h1v4h-1zM291 228h1v4h-1zM292 228h1v4h-1zM293 228h1v4h-1zM294 228h1v4h-1zM295 228h1v4h-1zM296 228h1v4h-1zM297 229h1v4h-1zM298 229h1v4h-1zM299 229h1v4h-1zM300 229h1v4h-1zM301 229h1v4h-1zM301 227h1v2h-1zM302 229h1v4h-1zM303 229h1v4h-1zM304 229h1v4h-1zM305 229h1v4h-1zM306 230h1v4h-1zM307 230h1v4h-1zM308 230h1v4h-1zM308 229h1v1h-1zM309 230h1v4h-1zM310 230h1v4h-1zM310 227h1v3h-1zM311 230h1v4h-1zM312 230h1v4h-1zM313 231h1v4h-1zM314 231h1v4h-1zM315 231h1v4h-1zM316 231h1v4h-1zM317 231h1v4h-1zM318 231h1v4h-1zM319 231h1v4h-1zM320 232h1v4h-1zM321 232h1v4h-1zM322 232h1v4h-1zM323 232h1v4h-1zM324 232h1v4h-1zM325 232h1v4h-1zM326 232h1v4h-1zM327 232h1v4h-1zM328 233h1v4h-1zM329 233h1v4h-1zM329 230h1v3h-1zM330 233h1v4h-1zM331 233h1v4h-1zM332 233h1v4h-1zM333 233h1v4h-1zM334 233h1v4h-1zM335 233h1v4h-1zM336 233h1v4h-1zM337 234h1v4h-1zM337 232h1v2h-1zM338 234h1v4h-1zM339 234h1v4h-1zM340 234h1v4h-1zM341 234h1v4h-1zM342 234h1v4h-1zM343 234h1v4h-1zM344 234h1v4h-1zM345 234h1v4h-1zM346 234h1v4h-1zM347 234h1v4h-1zM348 235h1v4h-1zM348 233h1v2h-1zM349 235h1v4h-1zM350 235h1v4h-1zM351 235h1v4h-1zM352 235h1v4h-1zM353 235h1v4h-1zM353 234h1v1h-1zM354 235h1v4h-1zM355 236h1v4h-1zM356 236h1v4h-1zM357 236h1v4h-1zM358 236h1v4h-1zM359 236h1v4h-1zM360 236h1v4h-1zM360 233h1v3h-1zM361 236h1v4h-1zM361 235h1v1h-1zM362 237h1v4h-1zM363 237h1v4h-1zM364 237h1v4h-1zM365 237h1v4h-1zM366 237h1v4h-1zM367 237h1v4h-1zM368 237h1v4h-1zM369 237h1v4h-1zM370 237h1v4h-1zM371 237h1v4h-1zM372 238h1v4h-1zM373 238h1v4h-1zM374 238h1v4h-1zM375 238h1v4h-1zM376 238h1v4h-1zM377 238h1v4h-1zM377 237h1v1h-1zM378 238h1v4h-1zM379 238h1v4h-1zM379 235h1v3h-1zM380 238h1v4h-1zM381 238h1v4h-1zM382 239h1v4h-1zM383 239h1v4h-1zM384 239h1v4h-1zM384 237h1v2h-1zM385 239h1v4h-1zM385 238h1v1h-1zM386 239h1v4h-1zM387 239h1v4h-1zM388 239h1v4h-1zM389 239h1v4h-1zM390 239h1v4h-1zM391 239h1v4h-1zM391 238h1v1h-1zM392 239h1v4h-1zM393 239h1v4h-1zM394 240h1v4h-1zM395 240h1v4h-1zM396 240h1v4h-1zM397 240h1v4h-1zM398 240h1v4h-1zM399 240h1v4h-1zM400 240h1v4h-1zM401 240h1v4h-1zM402 240h1v4h-1zM403 240h1v4h-1zM404 240h1v4h-1zM405 240h1v4h-1zM406 240h1v4h-1zM407 240h1v4h-1zM408 240h1v4h-1zM409 240h1v4h-1zM410 240h1v4h-1zM410 238h1v2h-1zM411 240h1v4h-1zM412 240h1v4h-1zM413 240h1v4h-1zM414 240h1v4h-1zM415 240h1v4h-1zM416 240h1v4h-1zM417 240h1v4h-1zM417 239h1v1h-1zM418 240h1v4h-1zM419 240h1v4h-1zM420 240h1v4h-1zM421 240h1v4h-1zM422 240h1v4h-1zM423 240h1v4h-1zM424 240h1v4h-1zM425 240h1v4h-1zM426 240h1v4h-1zM427 240h1v4h-1zM428 240h1v4h-1zM429 240h1v4h-1zM430 240h1v4h-1zM431 240h1v4h-1zM431 237h1v3h-1zM432 240h1v4h-1zM433 240h1v4h-1zM434 240h1v4h-1zM435 240h1v4h-1zM436 240h1v4h-1zM437 240h1v4h-1zM438 240h1v4h-1zM439 240h1v4h-1zM440 240h1v4h-1zM441 240h1v4h-1zM441 239h1v1h-1zM442 240h1v4h-1zM443 240h1v4h-1zM444 240h1v4h-1zM445 240h1v4h-1zM446 240h1v4h-1zM447 240h1v4h-1zM448 240h1v4h-1zM449 240h1v4h-1zM449 238h1v2h-1zM450 241h1v4h-1zM451 241h1v4h-1zM451 239h1v2h-1zM452 241h1v4h-1zM453 241h1v4h-1zM454 241h1v4h-1zM455 241h1v4h-1zM456 241h1v4h-1zM457 241h1v4h-1zM458 241h1v4h-1zM459 241h1v4h-1zM460 241h1v4h-1zM461 241h1v4h-1zM462 241h1v4h-1zM463 241h1v4h-1zM464 241h1v4h-1zM465 241h1v4h-1zM466 241h1v4h-1zM467 241h1v4h-1zM467 240h1v1h-1zM468 241h1v4h-1zM469 241h1v4h-1zM470 241h1v4h-1zM471 241h1v4h-1zM472 241h1v4h-1zM473 241h1v4h-1zM474 241h1v4h-1zM475 241h1v4h-1zM476 241h1v4h-1zM477 241h1v4h-1zM478 241h1v4h-1zM479 241h1v4h-1zM480 241h1v4h-1zM481 241h1v4h-1zM482 241h1v4h-1zM483 241h1v4h-1zM484 241h1v4h-1zM485 241h1v4h-1zM486 241h1v4h-1zM486 240h1v1h-1zM487 241h1v4h-1zM488 241h1v4h-1zM489 241h1v4h-1zM490 241h1v4h-1zM491 241h1v4h-1zM491 239h1v2h-1zM492 241h1v4h-1zM493 241h1v4h-1zM494 241h1v4h-1zM495 241h1v4h-1zM496 241h1v4h-1zM496 238h1v3h-1zM497 241h1v4h-1zM498 241h1v4h-1zM499 241h1v4h-1zM500 241h1v4h-1zM500 239h1v2h-1zM501 241h1v4h-1zM502 241h1v4h-1zM503 241h1v4h-1zM504 241h1v4h-1zM504 238h1v3h-1zM505 241h1v4h-1zM505 238h1v3h-1zM506 241h1v4h-1zM507 241h1v4h-1zM508 241h1v4h-1zM509 241h1v4h-1zM510 241h1v4h-1zM511 241h1v4h-1zM512 241h1v4h-1zM513 241h1v4h-1zM514 241h1v4h-1zM515 241h1v4h-1zM516 241h1v4h-1zM517 241h1v4h-1zM518 241h1v4h-1zM519 241h1v4h-1zM520 241h1v4h-1zM521 241h1v4h-1zM522 241h1v4h-1zM522 239h1v2h-1zM523 241h1v4h-1zM524 241h1v4h-1zM525 241h1v4h-1zM526 241h1v4h-1zM527 241h1v4h-1zM528 241h1v4h-1zM529 241h1v4h-1zM530 241h1v4h-1zM531 241h1v4h-1zM532 241h1v4h-1zM533 241h1v4h-1zM534 241h1v4h-1zM535 241h1v4h-1zM535 238h1v3h-1zM536 241h1v4h-1zM537 241h1v4h-1zM538 241h1v4h-1zM539 241h1v4h-1zM540 241h1v4h-1zM541 241h1v4h-1zM541 240h1v1h-1zM542 241h1v4h-1zM543 241h1v4h-1zM544 241h1v4h-1zM545 241h1v4h-1zM546 241h1v4h-1zM547 241h1v4h-1zM548 241h1v4h-1zM549 241h1v4h-1zM550 241h1v4h-1zM551 241h1v4h-1zM551 238h1v3h-1zM552 241h1v4h-1zM553 241h1v4h-1zM554 241h1v4h-1zM555 241h1v4h-1zM556 241h1v4h-1zM557 241h1v4h-1zM558 241h1v4h-1zM559 241h1v4h-1zM560 241h1v4h-1zM561 241h1v4h-1zM562 241h1v4h-1zM563 241h1v4h-1zM564 241h1v4h-1zM565 241h1v4h-1zM566 241h1v4h-1zM567 241h1v4h-1zM568 241h1v4h-1zM569 241h1v4h-1zM570 241h1v4h-1zM571 241h1v4h-1zM572 241h1v4h-1zM573 241h1v4h-1zM574 241h1v4h-1zM575 241h1v4h-1zM576 241h1v4h-1zM576 238h1v3h-1zM577 241h1v4h-1zM578 241h1v4h-1zM579 241h1v4h-1zM580 241h1v4h-1zM581 241h1v4h-1zM582 241h1v4h-1zM583 241h1v4h-1zM584 241h1v4h-1zM585 241h1v4h-1zM586 241h1v4h-1zM587 241h1v4h-1zM588 241h1v4h-1zM589 241h1v4h-1zM590 241h1v4h-1zM591 241h1v4h-1zM592 241h1v4h-1zM592 239h1v2h-1zM593 241h1v4h-1zM594 241h1v4h-1zM594 240h1v1h-1zM595 241h1v4h-1zM596 241h1v4h-1zM597 241h1v4h-1zM598 241h1v4h-1zM599 241h1v4h-1zM600 241h1v4h-1zM601 241h1v4h-1zM601 238h1v3h-1zM602 241h1v4h-1zM603 241h1v4h-1zM603 238h1v3h-1zM604 241h1v4h-1zM605 241h1v4h-1zM606 241h1v4h-1zM607 241h1v4h-1zM607 240h1v1h-1zM608 241h1v4h-1zM609 241h1v4h-1zM610 241h1v4h-1zM611 241h1v4h-1zM611 238h1v3h-1zM612 241h1v4h-1zM613 241h1v4h-1zM614 241h1v4h-1zM615 241h1v4h-1zM615 239h1v2h-1zM616 241h1v4h-1zM617 241h1v4h-1zM618 241h1v4h-1zM619 241h1v4h-1zM620 241h1v4h-1zM621 241h1v4h-1zM622 241h1v4h-1zM623 241h1v4h-1zM624 241h1v4h-1zM625 241h1v4h-1zM626 241h1v4h-1zM627 241h1v4h-1zM628 241h1v4h-1zM629 241h1v4h-1zM630 241h1v4h-1zM631 241h1v4h-1zM632 241h1v4h-1zM633 241h1v4h-1zM634 241h1v4h-1zM635 241h1v4h-1zM636 241h1v4h-1zM637 241h1v4h-1zM638 241h1v4h-1zM639 241h1v4h-1zM640 241h1v4h-1zM641 241h1v4h-1zM642 241h1v4h-1zM643 241h1v4h-1zM644 241h1v4h-1zM645 241h1v4h-1zM646 241h1v4h-1zM647 241h1v4h-1zM648 241h1v4h-1zM649 241h1v4h-1zM650 241h1v4h-1zM651 241h1v4h-1zM652 241h1v4h-1zM653 241h1v4h-1zM654 241h1v4h-1zM654 238h1v3h-1zM655 241h1v4h-1zM655 238h1v3h-1zM656 241h1v4h-1zM656 238h1v3h-1zM557 244h1v9h-1zM560 208h1v38h-1zM565 234h1v10h-1zM567 228h1v16h-1zM569 236h1v8h-1zM574 236h1v8h-1zM575 237h1v7h-1zM576 242h1v14h-1zM594 232h1v12h-1zM600 234h1v10h-1zM602 238h1v6h-1zM556 239h1v5h-1zM590 243h1v7h-1zM610 238h1v6h-1zM628 243h1v6h-1zM540 238h1v6h-1zM520 243h1v6h-1zM500 239h1v5h-1zM472 238h1v6h-1z" fill="#22ff00"/>
<path d="M17 111.5H656" stroke="#f5aa55" stroke-width="1" stroke-dasharray="10 2" fill="none"/>
<path d="M17 244.5H656" stroke="#ff7800" stroke-width="1" stroke-dasharray="5 2" fill="none"/>
<path d="M332.5 44.5L337.5 49.5L342.5 44.5" stroke="#ff8c00" stroke-width="1.6" fill="none"/>
<path d="M651 44H657V50Z" fill="#ff8c00"/>
<path d="M8 219.5H15 M11.5 220V227" stroke="#ffff00" stroke-width="1.2" fill="none"/>
<path d="M11 230L16.5 235L11 240Z" fill="#ffff00"/>
<path d="M11 238L16.5 242.5L11 247Z" fill="#ffff00"/>
<text x="0.53" y="247" font-size="14" textLength="4.18" lengthAdjust="spacingAndGlyphs" fill="#ffff00" font-weight="bold">1</text>
<path d="M11 243.5H7.5V250 M3 250.5H12 M4 252.5H11 M6 254.5H9" stroke="#ffff00" stroke-width="1" fill="none"/>
<text x="-0.55" y="374.5" font-size="14.5" textLength="6.10" lengthAdjust="spacingAndGlyphs" fill="#22ff00">2</text>
<path d="M11 365.5L16.5 370.5L11 376Z" fill="#22ff00"/>
<path d="M11 371.5H7.5V378 M3 378.5H12 M4 380.5H11 M6 382.5H9" stroke="#22ff00" stroke-width="1" fill="none"/>
<rect x="660.5" y="43.5" width="138" height="399" rx="4" fill="#1a1a1a" stroke="#8c8c8c" stroke-width="1"/>
<rect x="661" y="83" width="137" height="20" fill="#565b5d"/>
<path d="M661 83.5H798 M661 102.5H798" stroke="#8c8c8c" stroke-width="1"/>
<rect x="665" y="90" width="1" height="1" fill="#e0e0e0"/>
<rect x="665" y="93" width="1" height="1" fill="#e0e0e0"/>
<rect x="665" y="96" width="1" height="1" fill="#e0e0e0"/>
<rect x="668" y="90" width="1" height="1" fill="#e0e0e0"/>
<rect x="668" y="93" width="1" height="1" fill="#e0e0e0"/>
<rect x="668" y="96" width="1" height="1" fill="#e0e0e0"/>
<rect x="789" y="90" width="1" height="1" fill="#e0e0e0"/>
<rect x="789" y="93" width="1" height="1" fill="#e0e0e0"/>
<rect x="789" y="96" width="1" height="1" fill="#e0e0e0"/>
<rect x="792" y="90" width="1" height="1" fill="#e0e0e0"/>
<rect x="792" y="93" width="1" height="1" fill="#e0e0e0"/>
<rect x="792" y="96" width="1" height="1" fill="#e0e0e0"/>
<text transform="translate(696.68 98) scale(0.7 1)" font-size="17.4" letter-spacing="0.959" fill="#dcdcdc" stroke="#565b5d" stroke-width="0.150">Acquisition</text>
<text transform="translate(706.70 117.75) scale(0.7 1)" font-size="17.4" letter-spacing="1.275" fill="#e0e0e0" stroke="#1a1a1a" stroke-width="0.150">Normal</text>
<text transform="translate(695.87 138) scale(0.7 1)" font-size="17.4" letter-spacing="1.401" fill="#e0e0e0" stroke="#1a1a1a" stroke-width="0.150">10.0MSa/s</text>
<rect x="661" y="163" width="137" height="20" fill="#565b5d"/>
<path d="M661 163.5H798 M661 182.5H798" stroke="#8c8c8c" stroke-width="1"/>
<rect x="665" y="170" width="1" height="1" fill="#e0e0e0"/>
<rect x="665" y="173" width="1" height="1" fill="#e0e0e0"/>
<rect x="665" y="176" width="1" height="1" fill="#e0e0e0"/>
<rect x="668" y="170" width="1" height="1" fill="#e0e0e0"/>
<rect x="668" y="173" width="1" height="1" fill="#e0e0e0"/>
<rect x="668" y="176" width="1" height="1" fill="#e0e0e0"/>
<rect x="789" y="170" width="1" height="1" fill="#e0e0e0"/>
<rect x="789" y="173" width="1" height="1" fill="#e0e0e0"/>
<rect x="789" y="176" width="1" height="1" fill="#e0e0e0"/>
<rect x="792" y="170" width="1" height="1" fill="#e0e0e0"/>
<rect x="792" y="173" width="1" height="1" fill="#e0e0e0"/>
<rect x="792" y="176" width="1" height="1" fill="#e0e0e0"/>
<text transform="translate(702.88 178) scale(0.7 1)" font-size="17.4" letter-spacing="0.122" fill="#dcdcdc" stroke="#565b5d" stroke-width="0.150">Channels</text>
<text x="664.11" y="198" font-size="17.4" textLength="10.91" lengthAdjust="spacingAndGlyphs" fill="#ffff00">DC</text>
<text transform="translate(756.07 198) scale(0.7 1)" font-size="17.4" letter-spacing="2.303" fill="#ffff00">10.0:1</text>
<text x="664.11" y="218" font-size="17.4" textLength="10.91" lengthAdjust="spacingAndGlyphs" fill="#22ff00">DC</text>
<text transform="translate(756.07 218) scale(0.7 1)" font-size="17.4" letter-spacing="2.303" fill="#22ff00">10.0:1</text>
<text x="664.11" y="238" font-size="17.4" textLength="10.91" lengthAdjust="spacingAndGlyphs" fill="#5a7cff">DC</text>
<text transform="translate(756.07 238) scale(0.7 1)" font-size="17.4" letter-spacing="2.303" fill="#5a7cff">10.0:1</text>
<text x="664.11" y="258" font-size="17.4" textLength="10.91" lengthAdjust="spacingAndGlyphs" fill="#ff148c">DC</text>
<text transform="translate(756.07 258) scale(0.7 1)" font-size="17.4" letter-spacing="2.303" fill="#ff148c">10.0:1</text>
<rect x="661" y="263" width="137" height="20" fill="#565b5d"/>
<path d="M661 263.5H798 M661 282.5H798" stroke="#8c8c8c" stroke-width="1"/>
<rect x="665" y="270" width="1" height="1" fill="#e0e0e0"/>
<rect x="665" y="273" width="1" height="1" fill="#e0e0e0"/>
<rect x="665" y="276" width="1" height="1" fill="#e0e0e0"/>
<rect x="668" y="270" width="1" height="1" fill="#e0e0e0"/>
<rect x="668" y="273" width="1" height="1" fill="#e0e0e0"/>
<rect x="668" y="276" width="1" height="1" fill="#e0e0e0"/>
<rect x="789" y="270" width="1" height="1" fill="#e0e0e0"/>
<rect x="789" y="273" width="1" height="1" fill="#e0e0e0"/>
<rect x="789" y="276" width="1" height="1" fill="#e0e0e0"/>
<rect x="792" y="270" width="1" height="1" fill="#e0e0e0"/>
<rect x="792" y="273" width="1" height="1" fill="#e0e0e0"/>
<rect x="792" y="276" width="1" height="1" fill="#e0e0e0"/>
<text transform="translate(706.48 278) scale(0.7 1)" font-size="17.4" letter-spacing="0.910" fill="#dcdcdc" stroke="#565b5d" stroke-width="0.150">Cursors</text>
<text transform="translate(663.64 298) scale(0.7 1)" font-size="17.4" letter-spacing="1.308" fill="#e0e0e0" stroke="#1a1a1a" stroke-width="0.150">ΔX:</text>
<text transform="translate(682.41 317.5) scale(0.7 1)" font-size="17.4" letter-spacing="1.831" fill="#e0e0e0" stroke="#1a1a1a" stroke-width="0.150">+1.732000000ms</text>
<text transform="translate(664.27 338) scale(0.7 1)" font-size="17.4" letter-spacing="1.978" fill="#e0e0e0" stroke="#1a1a1a" stroke-width="0.150">1/ΔX:</text>
<text transform="translate(726.41 358) scale(0.7 1)" font-size="17.4" letter-spacing="1.419" fill="#e0e0e0" stroke="#1a1a1a" stroke-width="0.150">+577.37Hz</text>
<text transform="translate(663.64 378) scale(0.7 1)" font-size="17.4" letter-spacing="1.156" fill="#e0e0e0" stroke="#1a1a1a" stroke-width="0.150">ΔY(</text>
<text x="685.78" y="378" font-size="17.4" textLength="8.44" lengthAdjust="spacingAndGlyphs" fill="#22ff00">2</text>
<text x="694.44" y="378" font-size="17.4" textLength="7.04" lengthAdjust="spacingAndGlyphs" fill="#e0e0e0" stroke="#1a1a1a" stroke-width="0.25">):</text>
<text transform="translate(724.51 397.6) scale(0.7 1)" font-size="17.4" letter-spacing="1.658" fill="#e0e0e0" stroke="#1a1a1a" stroke-width="0.150">+26.5000V</text>
<path d="M664 322.5H795 M664 362.5H795 M664 402.5H795" stroke="#8c8c8c" stroke-width="1"/>
<path d="M667.5 62.8 L669 62 L671.5 61.5 L673 59.5 L673.8 56 L675 53.5 L676.5 52.5 L678 53.5 L679.2 56 L680 59.5 L681 61.8 L682.5 62.5 L684 61.5 L685.5 58.5 L686.5 53.5 L688 49.8 L690 48.5 L692 49.8 L693.3 53.5 L694.3 58.5 L695.3 61.8 L696.3 62.8 L697.5 61 L698.3 58 L699.3 56.2 L700.5 55.5 L701.7 56.2 L702.6 58 L703.5 61 L704.5 62.2 L704.5 63 L701 63.5 L698.7 64.5 L697.8 67 L697 70.5 L695.5 73.5 L694 70.5 L693.2 67 L692 64.3 L690.5 63.3 L688 63.5 L686.3 65.5 L685.3 70 L684.3 74.5 L682.3 77.5 L680.3 74.5 L679.3 70 L678.3 65.5 L676.5 63.8 L674.5 64.3 L673.5 67 L671.5 70.3 L669.5 67 L668.3 64.5 L667.5 63.3Z" fill="#e8112d"/>
<text x="709.18" y="63" font-size="17.4" textLength="80.74" lengthAdjust="spacingAndGlyphs" fill="#ffffff" font-weight="bold">KEYSIGHT</text>
<text x="710.78" y="75" font-size="10.2" textLength="77.67" lengthAdjust="spacingAndGlyphs" fill="#ffffff">TECHNOLOGIES</text>
<text transform="translate(3.45 458) scale(0.7 1)" font-size="17.4" letter-spacing="0.923" fill="#e0e0e0" stroke="#000" stroke-width="0.150">Save to file =</text>
<rect x="86.5" y="444.5" width="187" height="18" rx="3" fill="#111111" stroke="#6a6a6a" stroke-width="1"/>
<text x="89.59" y="457.7" font-size="16.5" textLength="62.13" lengthAdjust="spacingAndGlyphs" fill="#e8e8e8" style="font-family:'Liberation Mono',monospace">scope_1</text>
<defs><linearGradient id="bg" x1="0" y1="0" x2="0" y2="1"><stop offset="0" stop-color="#5a5e61"/><stop offset="0.4" stop-color="#54585b"/><stop offset="0.9" stop-color="#2b2e31"/><stop offset="1" stop-color="#2a2d30"/></linearGradient><linearGradient id="bo" x1="0" y1="0" x2="0" y2="1"><stop offset="0" stop-color="#404346"/><stop offset="1" stop-color="#2a2d30"/></linearGradient></defs>
<rect x="7" y="464" width="126" height="38" rx="4" fill="url(#bo)"/>
<rect x="7.5" y="464.5" width="125" height="37" rx="4" fill="none" stroke="#4b4e51" stroke-width="1"/>
<rect x="10" y="464" width="120" height="36" rx="2" fill="url(#bg)"/>
<rect x="10" y="500" width="120" height="1" fill="#3d4043"/>
<rect x="139" y="464" width="126" height="38" rx="4" fill="url(#bo)"/>
<rect x="139.5" y="464.5" width="125" height="37" rx="4" fill="none" stroke="#4b4e51" stroke-width="1"/>
<rect x="142" y="464" width="120" height="36" rx="2" fill="url(#bg)"/>
<rect x="142" y="500" width="120" height="1" fill="#3d4043"/>
<rect x="271" y="464" width="126" height="38" rx="4" fill="url(#bo)"/>
<rect x="271.5" y="464.5" width="125" height="37" rx="4" fill="none" stroke="#4b4e51" stroke-width="1"/>
<rect x="274" y="464" width="120" height="36" rx="2" fill="url(#bg)"/>
<rect x="274" y="500" width="120" height="1" fill="#3d4043"/>
<rect x="403" y="464" width="126" height="38" rx="4" fill="url(#bo)"/>
<rect x="403.5" y="464.5" width="125" height="37" rx="4" fill="none" stroke="#4b4e51" stroke-width="1"/>
<rect x="406" y="464" width="120" height="36" rx="2" fill="url(#bg)"/>
<rect x="406" y="500" width="120" height="1" fill="#3d4043"/>
<rect x="667" y="464" width="126" height="38" rx="4" fill="url(#bo)"/>
<rect x="667.5" y="464.5" width="125" height="37" rx="4" fill="none" stroke="#4b4e51" stroke-width="1"/>
<rect x="670" y="464" width="120" height="36" rx="2" fill="url(#bg)"/>
<rect x="670" y="500" width="120" height="1" fill="#3d4043"/>
<text transform="translate(46.50 478) scale(0.7 1)" font-size="17.4" letter-spacing="1.433" fill="#e0e0e0" stroke="#55595c" stroke-width="0.150">Format</text>
<text x="56.74" y="497" font-size="17.4" textLength="25.33" lengthAdjust="spacingAndGlyphs" fill="#e0e0e0" stroke="#34373a" stroke-width="0.25">PNG</text>
<text transform="translate(179.55 478) scale(0.7 1)" font-size="17.4" letter-spacing="0.776" fill="#e0e0e0" stroke="#55595c" stroke-width="0.150">Save to</text>
<text x="193.50" y="497" font-size="17.4" textLength="35.70" lengthAdjust="spacingAndGlyphs" fill="#e0e0e0" stroke="#34373a" stroke-width="0.25">\usb</text>
<text transform="translate(304.25 478) scale(0.7 1)" font-size="17.4" letter-spacing="0.275" fill="#e0e0e0" stroke="#55595c" stroke-width="0.150">File Name</text>
<text transform="translate(441.25 478) scale(0.7 1)" font-size="17.4" letter-spacing="0.895" fill="#e0e0e0" stroke="#55595c" stroke-width="0.150">Settings</text>
<text transform="translate(703.40 478) scale(0.7 1)" font-size="17.4" letter-spacing="1.150" fill="#e0e0e0" stroke="#55595c" stroke-width="0.150">Press to</text>
<text transform="translate(714.45 497) scale(0.7 1)" font-size="17.4" letter-spacing="0.539" fill="#e0e0e0" stroke="#34373a" stroke-width="0.150">Save</text>
<path d="M327.0 487H340.0V491H348.0L333.5 499.5L319.0 491H327.0Z" fill="#e0e0e0"/>
<path d="M459.0 487H472.0V491H480.0L465.5 499.5L451.0 491H459.0Z" fill="#e0e0e0"/>
<path d="M19 468.5H24.5L27.3 471.3V476.7L24.5 479.5H19.5" stroke="#3a3a4c" stroke-width="5" fill="none"/>
<path d="M11.6 474L15.5 469.5L19.4 474L17.6 474.2L20.5 477.3L18.6 480.6L14.8 476.2L13.4 474.6Z" fill="#3a3a4c" stroke="#3a3a4c" stroke-width="1.6" stroke-linejoin="round"/>
<path d="M19 468.5H24.5L27.3 471.3V476.7L24.5 479.5H19.5" stroke="#b4ff00" stroke-width="3" fill="none"/>
<path d="M11.6 474L15.5 469.5L19.4 474L17.6 474.2L20.5 477.3L18.6 480.6L14.8 476.2L13.4 474.6Z" fill="#b4ff00"/>
<path d="M152.5 468.2A5.8 5.8 0 1 1 147.7 474.5V472" stroke="#75797c" stroke-width="1" fill="none"/>
<path d="M145 474.2L147.7 471.2L150.4 474.2Z" fill="#75797c"/>
<path d="M176 486H187V497H176L174 495V488Z" fill="#e0e0e0"/>
<rect x="176" y="489" width="2" height="4.5" fill="#222"/>
<rect x="187.5" y="487.5" width="5" height="8" fill="#222" stroke="#e0e0e0" stroke-width="1"/>
<rect x="189" y="489" width="2" height="1.5" fill="#e0e0e0"/><rect x="189" y="492.5" width="2" height="1.5" fill="#e0e0e0"/>
</svg></body></html>
